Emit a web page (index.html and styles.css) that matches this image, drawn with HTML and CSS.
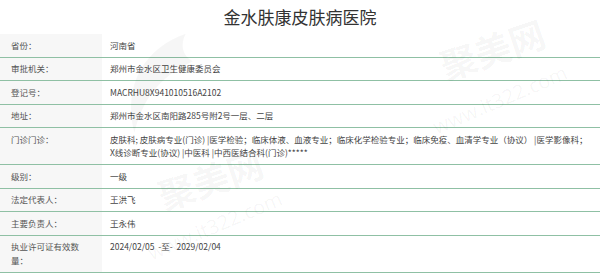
FILE: index.html
```html
<!DOCTYPE html>
<html lang="zh-CN">
<head>
<meta charset="utf-8">
<title>金水肤康皮肤病医院</title>
<link rel="stylesheet" href="styles.css">
</head>
<body>
<div class="page">
  <h1 class="title">金水肤康皮肤病医院</h1>
  <div class="info">
    <div class="row"><div class="label">省份：</div><div class="value">河南省</div></div>
    <div class="row"><div class="label">审批机关：</div><div class="value">郑州市金水区卫生健康委员会</div></div>
    <div class="row"><div class="label">登记号：</div><div class="value">MACRHU8X941010516A2102</div></div>
    <div class="row"><div class="label">地址：</div><div class="value">郑州市金水区南阳路285号附2号一层、二层</div></div>
    <div class="row"><div class="label">门诊门诊：</div><div class="value">皮肤科; 皮肤病专业(门诊) |医学检验；临床体液、血液专业；临床化学检验专业；临床免疫、血清学专业（协议） |医学影像科；X线诊断专业(协议) |中医科 |中西医结合科(门诊)*****</div></div>
    <div class="row"><div class="label">级别：</div><div class="value">一级</div></div>
    <div class="row"><div class="label">法定代表人：</div><div class="value">王洪飞</div></div>
    <div class="row"><div class="label">主要负责人：</div><div class="value">王永伟</div></div>
    <div class="row"><div class="label">执业许可证有效数量：</div><div class="value">2024/02/05 &nbsp;-至- &nbsp;2029/02/04</div></div>
  </div>
  <span class="wm wm-brand wm-brand-top" aria-hidden="true">聚美网</span>
  <span class="wm wm-url wm-url-top" aria-hidden="true">www.it322.com</span>
  <span class="wm wm-brand wm-brand-bottom" aria-hidden="true">聚美网</span>
  <span class="wm wm-url wm-url-bottom" aria-hidden="true">www.it322.com</span>
  <svg class="wm-logo" viewBox="0 0 100 120" aria-hidden="true">
    <path d="M78 4 C36 18 8 58 22 112 C30 80 46 52 86 34 C74 28 72 16 78 4 Z" fill="rgba(0,0,0,0.035)"/>
  </svg>
</div>
</body>
</html>
```

FILE: styles.css
```css
html, body {
  margin: 0;
  padding: 0;
  background: #fff;
}

.page {
  position: relative;
  width: 600px;
  height: 273px;
  overflow: hidden;
  font-family: "Noto Sans CJK SC", "Noto Sans", sans-serif;
  color: #444;
}

.title {
  margin: 0;
  height: 34px;
  line-height: 33px;
  text-align: center;
  font-size: 17px;
  font-weight: normal;
  color: #333;
}

.info {
  font-size: 8.5px;
  line-height: 13.5px;
}

.row {
  display: grid;
  grid-template-columns: 102px 1fr;
  border-bottom: 1px solid #8fc0a4;
}

.label {
  background: #f7f7f7;
  padding: 4.5px 11px;
  color: #555;
}

.value {
  padding: 4.5px 12px 4.5px 8px;
  color: #444;
}

.wm {
  position: absolute;
  white-space: nowrap;
  color: rgba(0, 0, 0, 0.045);
  pointer-events: none;
  font-family: "Noto Sans CJK SC", sans-serif;
}

.wm-brand {
  font-size: 36px;
  font-weight: bold;
  word-spacing: 0;
  line-height: 42px;
  transform: translate(-50%, -50%) rotate(-19deg);
}

.wm-url {
  font-family: "Open Sans", sans-serif;
  font-size: 20px;
  line-height: 24px;
  transform: translate(-50%, -50%) rotate(-23deg);
}

.wm-brand-top {
  left: 492px;
  top: 48px;
}

.wm-url-top {
  left: 500px;
  top: 100px;
}

.wm-brand-bottom {
  left: 210px;
  top: 178px;
}

.wm-url-bottom {
  left: 215px;
  top: 226px;
}

.wm-logo {
  position: absolute;
  left: 110px;
  top: 30px;
  width: 100px;
  height: 110px;
}
```
